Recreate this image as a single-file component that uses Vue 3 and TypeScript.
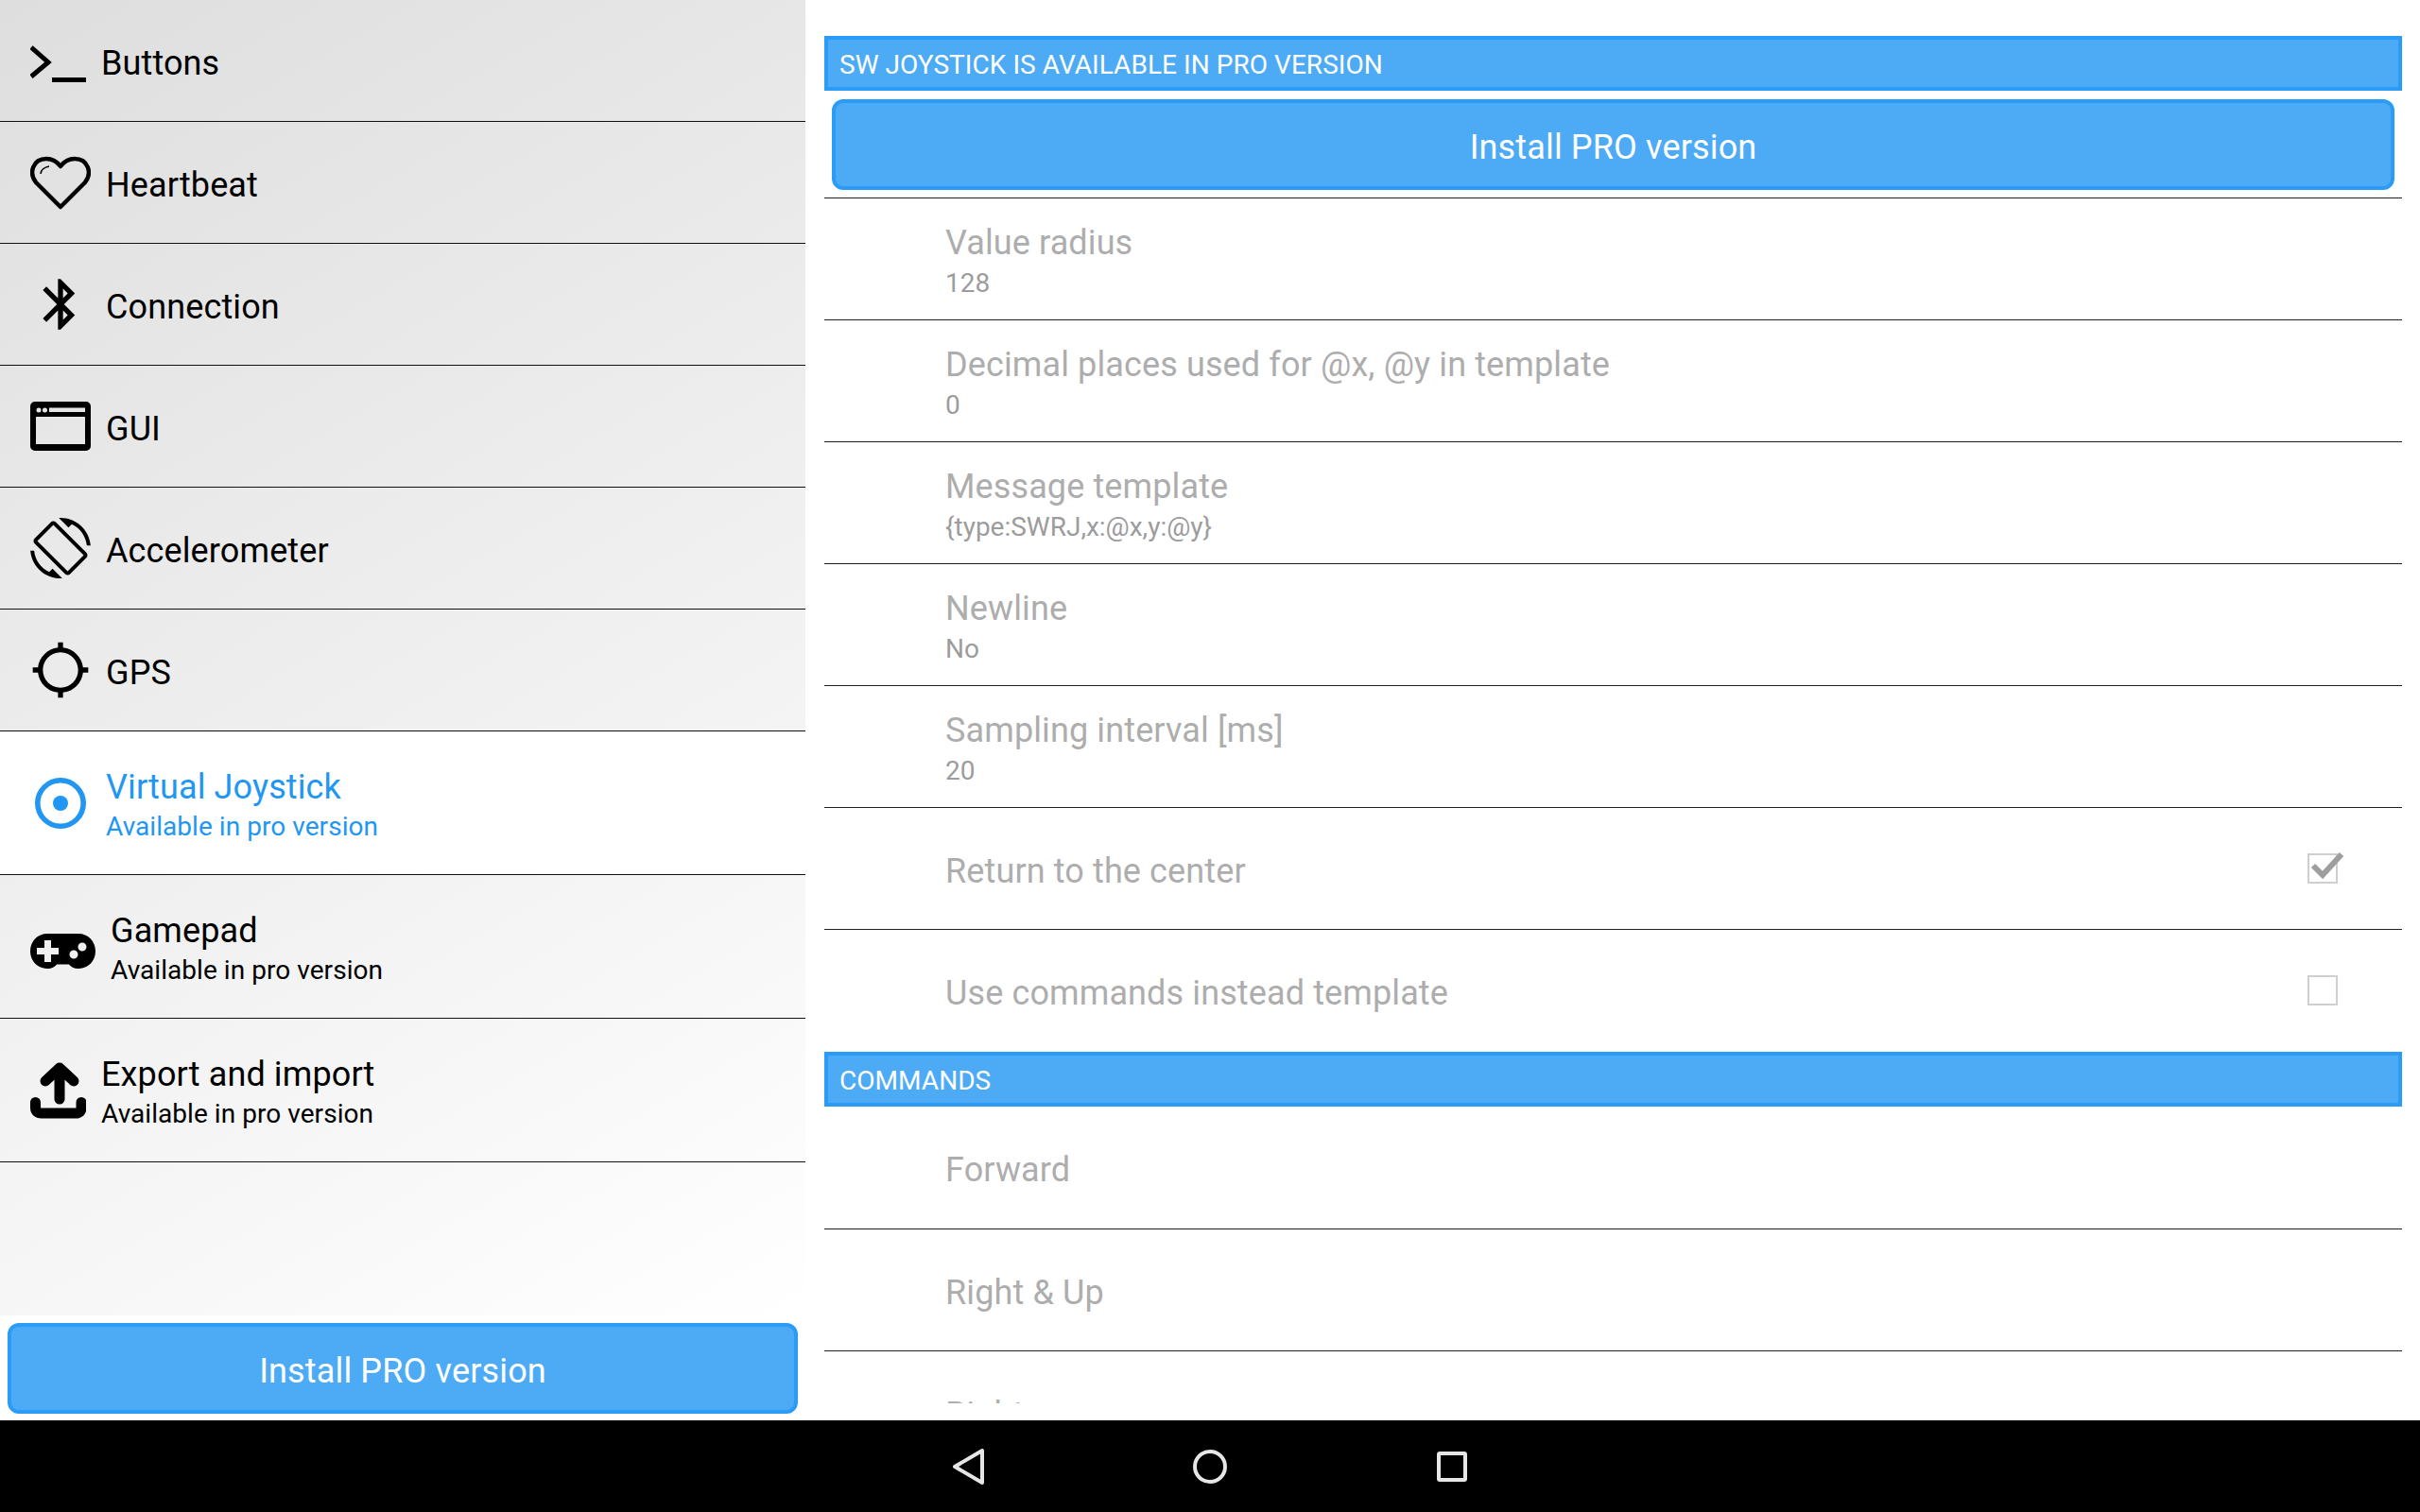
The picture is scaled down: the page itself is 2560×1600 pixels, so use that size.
<template>
  <div class="screen">
    <div class="main">
      <!-- left menu -->
      <aside class="side">
        <div class="menu">
          <div
            v-for="item in menu"
            :key="item.key"
            class="menu-item"
            :class="{ active: item.key === 'joystick', pro: item.pro }"
          >
            <svg v-if="item.key === 'buttons'" class="icon" width="59" height="64" viewBox="0 0 59 64">
              <path d="M1 18L19 34L1 49" fill="none" stroke="currentColor" stroke-width="5" />
              <rect x="23" y="50" width="36" height="5" fill="currentColor" />
            </svg>
            <svg v-else-if="item.key === 'heartbeat'" class="icon" width="64" height="64" viewBox="0 0 64 64">
              <g transform="translate(0 4)">
                <path d="M32 54L6 28C-2 18 3 3 17 3C24 3 29 7 32 11C35 7 40 3 47 3C61 3 66 18 58 28Z" fill="none" stroke="currentColor" stroke-width="4.5" stroke-linejoin="round" />
                <path d="M11 19C11 15 15 12 20 11" fill="none" stroke="currentColor" stroke-width="1.5" />
              </g>
            </svg>
            <svg v-else-if="item.key === 'connection'" class="icon" width="64" height="64" viewBox="0 0 24 24">
              <path fill="currentColor" d="M17.71 7.71L12 2h-1v7.59L6.41 5 5 6.41 10.59 12 5 17.59 6.41 19 11 14.41V22h1l5.71-5.71-4.3-4.29 4.3-4.29zM13 5.83l1.88 1.88L13 9.59V5.83zm1.88 10.46L13 18.17v-3.76l1.88 1.88z" />
            </svg>
            <svg v-else-if="item.key === 'gui'" class="icon" width="64" height="64" viewBox="0 0 64 64">
              <g transform="translate(0 6)">
                <path fill="currentColor" fill-rule="evenodd" d="M5 0H59A5 5 0 0 1 64 5V47A5 5 0 0 1 59 52H5A5 5 0 0 1 0 47V5A5 5 0 0 1 5 0ZM6 16V45H58V16ZM20 6.500V11H58V6.500ZM9 6.500A2.500 2.500 0 1 0 9 11.500A2.500 2.500 0 1 0 9 6.500ZM15.500 6.500A2.500 2.500 0 1 0 15.500 11.500A2.500 2.500 0 1 0 15.500 6.500Z" />
              </g>
            </svg>
            <svg v-else-if="item.key === 'accel'" class="icon" width="64" height="64" viewBox="0 0 24 24">
              <path fill="currentColor" d="M16.48 2.52c3.27 1.55 5.61 4.72 5.97 8.48h1.5C23.44 4.84 18.29 0 12 0l-.66.03 3.81 3.81 1.33-1.32zm-6.25-.77c-.59-.59-1.54-.59-2.12 0L1.75 8.11c-.59.59-.59 1.54 0 2.12l12.02 12.02c.59.59 1.54.59 2.12 0l6.36-6.36c.59-.59.59-1.54 0-2.12L10.23 1.75zm4.6 19.44L2.81 9.17l6.36-6.36 12.02 12.02-6.36 6.36zm-7.31.29C4.25 19.94 1.91 16.76 1.55 13H.05C.56 19.16 5.71 24 12 24l.66-.03-3.81-3.81-1.33 1.32z" />
            </svg>
            <svg v-else-if="item.key === 'gps'" class="icon" width="64" height="64" viewBox="0 0 24 24">
              <path fill="currentColor" d="M20.94 11c-.46-4.17-3.77-7.48-7.94-7.94V1h-2v2.06C6.83 3.52 3.52 6.83 3.06 11H1v2h2.06c.46 4.17 3.77 7.48 7.94 7.94V23h2v-2.060c4.170-.46 7.480-3.770 7.940-7.940H23v-2h-2.060zM12 19c-3.870 0-7-3.130-7-7s3.130-7 7-7 7 3.130 7 7-3.130 7-7 7z" />
            </svg>
            <svg v-else-if="item.key === 'joystick'" class="icon" width="64" height="64" viewBox="0 0 64 64">
              <circle cx="32" cy="32" r="24.200" fill="none" stroke="currentColor" stroke-width="5.600" />
              <circle cx="32" cy="32" r="8" fill="currentColor" />
            </svg>
            <svg v-else-if="item.key === 'gamepad'" class="icon" width="69" height="64" viewBox="0 0 69 64">
              <g transform="translate(0 18)">
                <path fill="currentColor" fill-rule="evenodd" d="M18 0H51C61 0 69 8 69 18.500S61 37 51 37C46 37 43 35 41 32.500H28C26 35 23 37 18 37C8 37 0 29 0 18.500S8 0 18 0ZM15 7V15H7V22H15V30H22V22H30V15H22V7ZM55 9.500A4.500 4.500 0 1 0 55 18.500A4.500 4.500 0 1 0 55 9.500ZM46 17.500A4.500 4.500 0 1 0 46 26.500A4.500 4.500 0 1 0 46 17.500Z" />
              </g>
            </svg>
            <svg v-else-if="item.key === 'export'" class="icon" width="59" height="64" viewBox="0 0 59 64">
              <g transform="translate(0 2)" fill="none" stroke="currentColor" stroke-width="11" stroke-linecap="round" stroke-linejoin="round">
                <path d="M31 39V6M16 20L31 6L46 20" />
                <path d="M5.500 42.500V48Q5.500 54 12 54H48Q54 54 54 48V42.500" />
              </g>
            </svg>
            <div class="menu-text">
              <div class="menu-title">{{ item.title }}</div>
              <div v-if="item.pro" class="menu-sub">Available in pro version</div>
            </div>
          </div>
        </div>
        <button class="pro-btn side-btn">Install PRO version</button>
      </aside>

      <!-- settings list -->
      <section class="settings">
        <div class="band">SW JOYSTICK IS AVAILABLE IN PRO VERSION</div>
        <div class="btn-row">
          <button class="pro-btn">Install PRO version</button>
        </div>
        <div v-for="row in generalRows" :key="row.title" class="row">
          <div class="row-text">
            <div class="row-title">{{ row.title }}</div>
            <div v-if="row.value" class="row-value">{{ row.value }}</div>
          </div>
          <div v-if="row.check !== undefined" class="check">
            <svg v-if="row.check" class="tick" width="40" height="34" viewBox="0 0 40 34">
              <path d="M6 18L16 28L36 6" fill="none" stroke="#9e9e9e" stroke-width="6" />
            </svg>
          </div>
        </div>
        <div class="band">COMMANDS</div>
        <div v-for="row in commandRows" :key="row" class="row">
          <div class="row-text">
            <div class="row-title">{{ row }}</div>
          </div>
        </div>
      </section>
    </div>

    <!-- android nav bar -->
    <footer class="navbar">
      <div class="nav-slot">
        <svg width="36" height="40" viewBox="0 0 36 40">
          <path d="M4 20L33 3V37Z" fill="none" stroke="#e6e6e6" stroke-width="4" stroke-linejoin="round" />
        </svg>
      </div>
      <div class="nav-slot">
        <svg width="36" height="36" viewBox="0 0 36 36">
          <circle cx="18" cy="18" r="16" fill="none" stroke="#e6e6e6" stroke-width="4" />
        </svg>
      </div>
      <div class="nav-slot">
        <svg width="32" height="32" viewBox="0 0 32 32">
          <rect x="2" y="2" width="28" height="28" rx="1" fill="none" stroke="#e6e6e6" stroke-width="4" />
        </svg>
      </div>
    </footer>
  </div>
</template>

<script setup lang="ts">
interface MenuItem {
  key: string
  title: string
  pro?: boolean
}

interface SettingRow {
  title: string
  value?: string
  check?: boolean
}

const menu: MenuItem[] = [
  { key: 'buttons', title: 'Buttons' },
  { key: 'heartbeat', title: 'Heartbeat' },
  { key: 'connection', title: 'Connection' },
  { key: 'gui', title: 'GUI' },
  { key: 'accel', title: 'Accelerometer' },
  { key: 'gps', title: 'GPS' },
  { key: 'joystick', title: 'Virtual Joystick', pro: true },
  { key: 'gamepad', title: 'Gamepad', pro: true },
  { key: 'export', title: 'Export and import', pro: true },
]

const generalRows: SettingRow[] = [
  { title: 'Value radius', value: '128' },
  { title: 'Decimal places used for @x, @y in template', value: '0' },
  { title: 'Message template', value: '{type:SWRJ,x:@x,y:@y}' },
  { title: 'Newline', value: 'No' },
  { title: 'Sampling interval [ms]', value: '20' },
  { title: 'Return to the center', check: true },
  { title: 'Use commands instead template', check: false },
]

const commandRows = ['Forward', 'Right & Up', 'Right']
</script>

<style>
html,
body {
  margin: 0;
  background: #fff;
}
</style>

<style scoped>
.screen {
  width: 2560px;
  height: 1600px;
  display: flex;
  flex-direction: column;
  overflow: hidden;
  background: #fff;
  font-family: Roboto, "Liberation Sans", sans-serif;
}

.main {
  height: 1503px;
  display: flex;
}

.side {
  width: 852px;
  display: flex;
  flex-direction: column;
}

.menu {
  height: 1392px;
  background: linear-gradient(150deg, #dedede 0%, #ffffff 100%);
}

.menu-item {
  height: 128px;
  display: flex;
  align-items: center;
  gap: 16px;
  padding-left: 32px;
  border-bottom: 1px solid #111;
  color: #000;
}

.menu-item.pro {
  height: 151px;
}

.menu-item.active {
  background: #fff;
  color: #2196f3;
}

.icon {
  flex: none;
}

.menu-text {
  padding-top: 5px;
}

.menu-title {
  font-size: 36px;
  line-height: 44px;
  letter-spacing: 0.12px;
}

.menu-sub {
  font-size: 28px;
  line-height: 38px;
  letter-spacing: 0.05px;
  margin-top: 1px;
}

.pro-btn {
  display: block;
  width: 100%;
  height: 96px;
  box-sizing: border-box;
  border: 4px solid #2a9bf6;
  border-radius: 12px;
  background: #4dabf5;
  color: #fff;
  font-family: inherit;
  font-size: 36px;
  letter-spacing: 0.15px;
  padding: 5px 0 0;
}

.side-btn {
  width: 836px;
  margin: 8px 8px 0;
}

.settings {
  flex: 1;
  height: 1485px;
  box-sizing: border-box;
  padding: 38px 19px 0 20px;
  overflow: hidden;
}

.band {
  height: 58px;
  box-sizing: border-box;
  border: 4px solid #2a9bf6;
  background: #4dabf5;
  color: #fff;
  font-size: 28px;
  line-height: 54px;
  letter-spacing: 0.05px;
  padding-left: 12px;
}

.btn-row {
  padding: 9px 8px 8px;
  border-bottom: 1px solid #212121;
}

.row {
  height: 128px;
  display: flex;
  align-items: center;
  justify-content: space-between;
  border-bottom: 1px solid #212121;
  padding-left: 128px;
  padding-right: 68px;
}

/* the row above a section band has no line */
.row:has(+ .band) {
  height: 128px;
  padding-bottom: 1px;
  border-bottom: none;
}

.band + .row {
  height: 129px;
}

.row-text {
  padding-top: 5px;
}

.row-title {
  font-size: 36px;
  line-height: 46px;
  letter-spacing: 0.12px;
  color: #adadad;
}

.row-value {
  font-size: 28px;
  line-height: 38px;
  margin-top: 1px;
  color: #9c9c9c;
}

.check {
  position: relative;
  width: 32px;
  height: 32px;
  box-sizing: border-box;
  border: 2px solid #cfcfcf;
}

.tick {
  position: absolute;
  left: -2px;
  top: -7px;
}

.navbar {
  height: 97px;
  display: flex;
  align-items: center;
  justify-content: center;
  background: #000;
}

.nav-slot {
  width: 256px;
  display: flex;
  justify-content: center;
}
</style>
